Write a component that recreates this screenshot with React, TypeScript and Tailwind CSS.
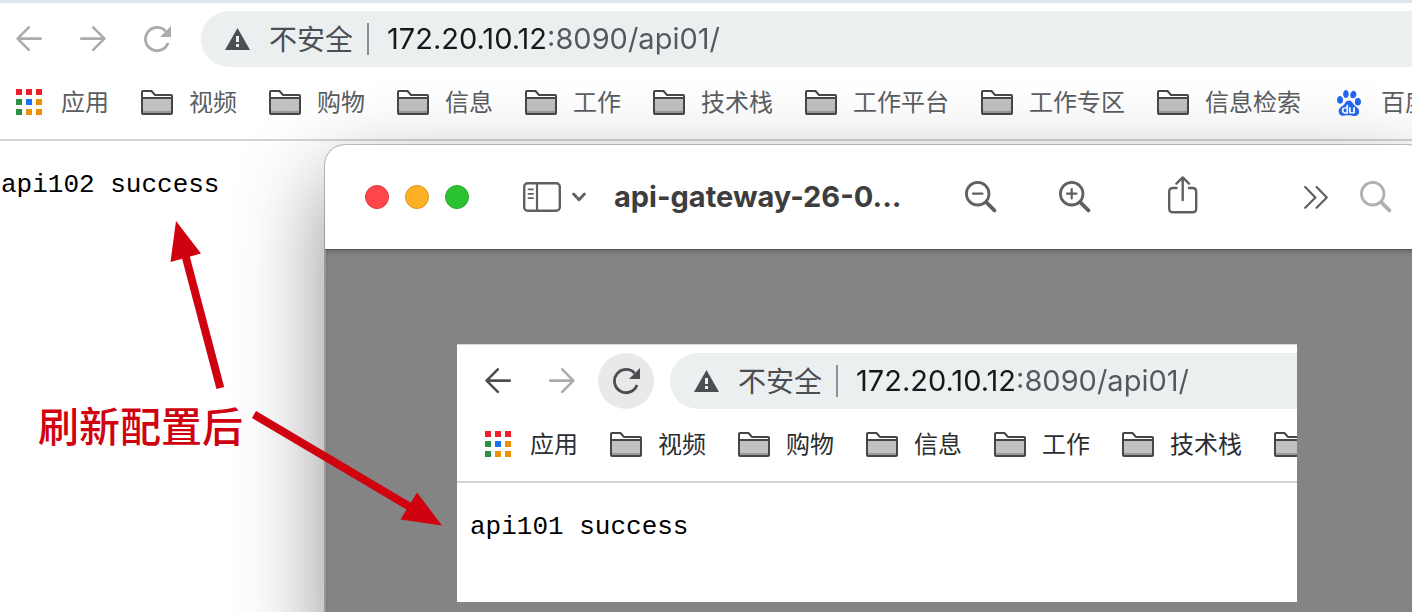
import { SiBaidu } from "react-icons/si";

type IconProps = { className?: string };

function BackIcon({ className = "" }: IconProps) {
  return (
    <svg className={`h-7 w-7 ${className}`} viewBox="0 0 28 28" fill="none" stroke="currentColor" strokeWidth="2.6" strokeLinecap="round" strokeLinejoin="round" aria-hidden="true">
      <path d="M25.8 13.6H2.6M13.8 2.4L2.6 13.6L13.8 24.8" />
    </svg>
  );
}

function ForwardIcon({ className = "" }: IconProps) {
  return (
    <svg className={`h-7 w-7 ${className}`} viewBox="0 0 28 28" fill="none" stroke="currentColor" strokeWidth="2.6" strokeLinecap="round" strokeLinejoin="round" aria-hidden="true">
      <path d="M2.2 13.6H25.4M14.2 2.4L25.4 13.6L14.2 24.8" />
    </svg>
  );
}

function ReloadIcon({ className = "" }: IconProps) {
  return (
    <svg className={`h-7 w-7 ${className}`} viewBox="0 0 28 28" fill="none" aria-hidden="true">
      <path d="M22.6 6.2A11.6 11.6 0 1 0 25 18" stroke="currentColor" strokeWidth="2.8" />
      <path d="M28 1V12H17z" fill="currentColor" />
    </svg>
  );
}

function WarningIcon() {
  return (
    <svg className="h-[22px] w-[25px] shrink-0 text-[#4b4e53]" viewBox="0 0 25 22" aria-hidden="true">
      <path d="M12.5 0L25 22H0z" fill="currentColor" />
      <path d="M11 8h3v6h-3zM11 16h3v3h-3z" fill="#ebeff0" />
    </svg>
  );
}

function FolderIcon() {
  return (
    <svg className="h-[26px] w-8 shrink-0" viewBox="0 0 32 26" aria-hidden="true">
      <path d="M1 23V2q0-1 1-1H10.5L14 5H30q1 0 1 1V23q0 1-1 1H2q-1 0-1-1z" fill="#fff" />
      <path d="M1 8H31V24H1z" fill="#c1c1c1" />
      <path d="M2 21H30V23H2z" fill="#989898" />
      <path d="M1 23V2q0-1 1-1H10.5L14 5H30q1 0 1 1V23q0 1-1 1H2q-1 0-1-1zM1 8H31" fill="none" stroke="#474747" strokeWidth="2" />
    </svg>
  );
}

function AppsIcon() {
  const colors = ["#f01e2c", "#f01e2c", "#f01e2c", "#2a9147", "#1a73f0", "#ea9108", "#2a9147", "#ea9108", "#ea9108"];
  return (
    <svg className="h-7 w-[29px] shrink-0" viewBox="0 0 29 28" aria-hidden="true">
      {colors.map((color, i) => (
        <rect key={i} x={(i % 3) * 10} y={Math.floor(i / 3) * 10} width="6" height="6" fill={color} />
      ))}
    </svg>
  );
}

function SidebarIcon() {
  return (
    <svg className="h-[30px] w-[38px]" viewBox="0 0 38 30" fill="none" stroke="currentColor" aria-hidden="true">
      <rect x="1.2" y="1.2" width="35.6" height="27.6" rx="3.5" strokeWidth="2.4" />
      <path d="M14 1V29" strokeWidth="2.2" />
      <path d="M5.5 7.3H10M5.5 11.8H10M5.5 16.2H10" strokeWidth="1.8" strokeLinecap="round" />
    </svg>
  );
}

function ChevronIcon() {
  return (
    <svg className="h-[10px] w-[14px]" viewBox="0 0 14 10" fill="none" stroke="currentColor" strokeWidth="2.8" strokeLinecap="round" strokeLinejoin="round" aria-hidden="true">
      <path d="M1.6 2L7 7.8L12.4 2" />
    </svg>
  );
}

function LensIcon({ sign = "" }: { sign?: string }) {
  return (
    <svg className="h-8 w-8" viewBox="0 0 32 32" fill="none" stroke="currentColor" strokeLinecap="round" aria-hidden="true">
      <circle cx="12.7" cy="12.7" r="11.3" strokeWidth="2.8" />
      <path d="M21.4 21.4L29.4 29.4" strokeWidth="3.8" />
      {sign && <path d={sign} strokeWidth="2.2" />}
    </svg>
  );
}

function ShareIcon() {
  return (
    <svg className="h-[38px] w-8" viewBox="0 0 32 38" fill="none" stroke="currentColor" strokeWidth="2.4" strokeLinecap="round" strokeLinejoin="round" aria-hidden="true">
      <path d="M10.5 12H6Q2.2 12 2.2 15.8V32.4Q2.2 36.2 6 36.2H25.4Q29.2 36.2 29.2 32.4V15.8Q29.2 12 25.4 12H21" strokeLinecap="butt" />
      <path d="M15.7 24V1.6M9.4 7.6L15.7 1.4L22 7.6" />
    </svg>
  );
}

function MoreIcon() {
  return (
    <svg className="h-6 w-6" viewBox="0 0 24 24" fill="none" stroke="currentColor" strokeWidth="2.2" strokeLinecap="round" strokeLinejoin="round" aria-hidden="true">
      <path d="M1.2 2L11.4 12.4L1.2 22.8M12.6 2L22.8 12.4L12.6 22.8" />
    </svg>
  );
}

type BrowserProps = {
  id: string;
  bookmarks: string[];
  body: string;
  framed?: boolean;
};

function Browser({ id, bookmarks, body, framed = false }: BrowserProps) {
  const bookmarkText = framed ? "text-[#2b2e31]" : "text-[#5a5e62]";
  return (
    <div className="w-full overflow-hidden bg-white">
      <header className={framed ? "border-t border-[#d3d9e0]" : "border-t-[3px] border-[#dfe3ea]"}>
        <div className={`flex items-center gap-2 pt-2 ${framed ? "pl-[13px]" : "pl-px"}`}>
          <button type="button" aria-label="后退" className={`flex h-14 w-14 shrink-0 items-center justify-center rounded-full ${framed ? "text-[#4b4e53]" : "text-[#a9acaf]"}`}>
            <BackIcon />
          </button>
          <button type="button" aria-label="前进" className="flex h-14 w-14 shrink-0 items-center justify-center rounded-full text-[#a9acaf]">
            <ForwardIcon />
          </button>
          <button type="button" aria-label="重新加载" className={`flex h-14 w-14 shrink-0 items-center justify-center rounded-full ${framed ? "bg-[#e9e9e9] text-[#4b4e53]" : "text-[#a9acaf]"}`}>
            <ReloadIcon />
          </button>
          <div className="ml-2 flex h-14 min-w-0 flex-1 items-center rounded-l-full bg-[#ebeff0] pl-6">
            <WarningIcon />
            <label htmlFor={id} className="ml-[19px] shrink-0 pt-0.5 text-[28px] leading-8 text-[#4b4e53]">
              不安全
            </label>
            <span className="ml-3.5 h-8 w-0.5 shrink-0 bg-[#8d9093]" />
            <input
              id={id}
              type="text"
              defaultValue="172.20.10.12:8090/api01/"
              className="ml-[18px] h-10 min-w-0 flex-1 bg-linear-to-r from-[#16181a] from-[161px] to-[#55585a] to-[161px] bg-clip-text text-[29px] text-transparent caret-black outline-none"
            />
          </div>
        </div>
        <nav className={`flex h-[74px] items-center gap-8 overflow-hidden border-b-2 border-[#d3d5d5] text-2xl whitespace-nowrap ${bookmarkText} ${framed ? "pl-7" : "pl-4"}`}>
          <a href="#apps" className="flex shrink-0 items-center gap-4">
            <AppsIcon />
            应用
          </a>
          {bookmarks.map((name) => (
            <a key={name} href="#bookmark" className="flex shrink-0 items-center gap-4">
              {name === "百度" ? (
                <span className="flex w-8 justify-center">
                  <SiBaidu className="h-[26px] w-[26px] text-[#2468f2]" aria-hidden="true" />
                </span>
              ) : (
                <FolderIcon />
              )}
              {name}
            </a>
          ))}
        </nav>
      </header>
      <pre className={`pt-7 font-['Liberation_Mono',monospace] text-[26px] leading-8 text-black ${framed ? "pb-[59px] pl-[13px]" : "pl-px"}`}>{body}</pre>
    </div>
  );
}

function PreviewWindow() {
  return (
    <section className="absolute top-[145px] -right-4 -bottom-10 left-[325px] flex flex-col overflow-hidden rounded-[20px] bg-[#848484] shadow-[0_0_0_1px_rgba(0,0,0,0.22),0_34px_88px_rgba(0,0,0,0.45)]">
      <header className="flex h-[105px] shrink-0 items-center border-b border-[#575757] bg-white pr-9 pl-10 text-[#606060]">
        <div className="flex shrink-0 gap-4">
          <button type="button" aria-label="关闭" className="h-6 w-6 rounded-full border border-[#e0383c] bg-[#ff4648]" />
          <button type="button" aria-label="最小化" className="h-6 w-6 rounded-full border border-[#dd961c] bg-[#fdb025]" />
          <button type="button" aria-label="缩放" className="h-6 w-6 rounded-full border border-[#22ac2b] bg-[#2ac231]" />
        </div>
        <button type="button" aria-label="边栏" className="ml-[54px] flex shrink-0 items-center gap-[11px]">
          <SidebarIcon />
          <ChevronIcon />
        </button>
        <h1 className="ml-7 min-w-0 flex-1 truncate text-[29px] leading-10 font-bold text-[#3d3d3d]">api-gateway-26-0...</h1>
        <div className="flex shrink-0 items-center">
          <button type="button" aria-label="缩小">
            <LensIcon sign="M8 12.7H17.4" />
          </button>
          <button type="button" aria-label="放大" className="ml-[62px]">
            <LensIcon sign="M8 12.7H17.4M12.7 8V17.4" />
          </button>
          <button type="button" aria-label="共享" className="ml-[76px] pb-1">
            <ShareIcon />
          </button>
          <button type="button" aria-label="更多" className="ml-[105px]">
            <MoreIcon />
          </button>
          <button type="button" aria-label="搜索" className="ml-8 text-[#b0b0b0]">
            <LensIcon />
          </button>
        </div>
      </header>
      <div className="flex flex-1 items-start justify-center border-l border-[#949494] pt-[94px] shadow-[inset_0_4px_5px_-2px_rgba(0,0,0,0.22)]">
        <div className="w-full max-w-[840px]">
          <Browser id="preview-url" framed bookmarks={["视频", "购物", "信息", "工作", "技术栈", "工作平台"]} body="api101 success" />
        </div>
      </div>
    </section>
  );
}

export default function App() {
  return (
    <main className="relative min-h-screen overflow-hidden bg-white font-[Inter,'Noto_Sans_CJK_SC',sans-serif]">
      <Browser
        id="page-url"
        bookmarks={["视频", "购物", "信息", "工作", "技术栈", "工作平台", "工作专区", "信息检索", "百度"]}
        body="api102 success"
      />
      <PreviewWindow />
      <svg className="pointer-events-none absolute top-[218px] left-[168px] h-[310px] w-[276px]" viewBox="168 218 276 310" fill="#d0020f" stroke="#d0020f" aria-hidden="true">
        <path d="M176 221L201 253.5L170.5 262z" stroke="none" />
        <path d="M185 254L220.3 388" strokeWidth="8" />
        <path d="M442 525.5L417 492.5L400.5 519.5z" stroke="none" />
        <path d="M254 414.5L411 507.5" strokeWidth="8" />
      </svg>
      <p className="absolute top-[403px] left-[38px] text-[41px] leading-[48px] font-medium whitespace-nowrap text-[#d0020f]">刷新配置后</p>
    </main>
  );
}
